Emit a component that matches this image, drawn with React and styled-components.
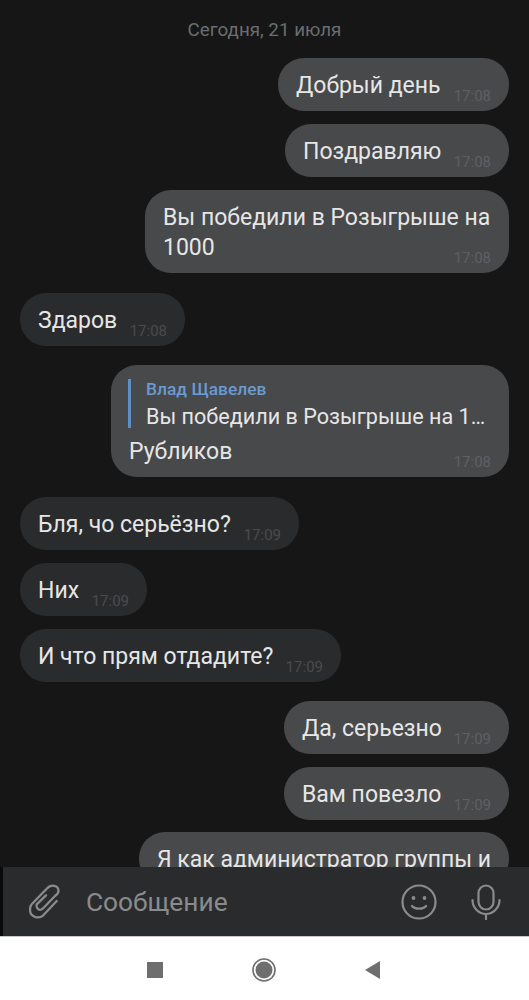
import React from 'react';
import styled, { createGlobalStyle } from 'styled-components';

const GlobalStyle = createGlobalStyle`
    html, body {
        margin: 0;
        padding: 0;
        background: #fff;
    }
    * {
        box-sizing: border-box;
    }
`;

const Screen = styled.div`
    display: flex;
    flex-direction: column;
    width: 529px;
    height: 1000px;
    overflow: hidden;
    font-family: Roboto, "Liberation Sans", sans-serif;
`;

const Chat = styled.main`
    flex: none;
    display: flex;
    flex-direction: column;
    height: 867px;
    padding: 0 20px;
    overflow: hidden;
    background: #161617;
`;

const DateLabel = styled.div`
    flex: none;
    height: 58px;
    padding-top: 19px;
    text-align: center;
    font-size: 18.8px;
    line-height: 22px;
    color: #6b6d70;
`;

const Bubble = styled.div`
    flex: none;
    position: relative;
    align-self: ${({ $out }) => ($out ? 'flex-end' : 'flex-start')};
    width: ${({ $width }) => $width}px;
    min-height: 53px;
    margin-top: ${({ $gap }) => $gap}px;
    padding: 13px 15px 10px 18px;
    border-radius: 26px;
    background: ${({ $out }) => ($out ? '#48494b' : '#2a2b2d')};
    font-size: 23px;
    line-height: 30px;
    color: #e6e6e6;
`;

const Time = styled.span`
    position: absolute;
    right: 18px;
    bottom: 6px;
    font-size: 15px;
    line-height: 17px;
    color: ${({ $out }) => ($out ? '#5f6063' : '#4a4b4e')};
`;

const Quote = styled.div`
    height: 49px;
    margin: 1px 0 9px -1px;
    padding-left: 15px;
    border-left: 3px solid #5e8fc4;
`;

const QuoteName = styled.div`
    font-size: 17.4px;
    font-weight: 500;
    line-height: 20px;
    color: #6a9bd1;
`;

const QuoteText = styled.div`
    font-size: 21.6px;
    line-height: 36px;
    white-space: nowrap;
`;

const Composer = styled.footer`
    flex: none;
    display: flex;
    align-items: center;
    height: 69px;
    padding: 0 28px 0 26px;
    border-left: 3px solid #0a0a0a;
    background: #2a2b2d;
`;

const Placeholder = styled.div`
    flex: 1;
    margin-left: 25px;
    font-size: 26.3px;
    color: #8a8b8d;
`;

const IconGroup = styled.div`
    display: flex;
    align-items: center;
    gap: 34px;
`;

const NavBar = styled.nav`
    flex: none;
    display: flex;
    align-items: center;
    gap: 89px;
    height: 64px;
    padding: 2px 0 0 147px;
    border-top: 1px solid #c9c9c9;
    background: #fff;
`;

const messages = [
    { id: 1, out: true, width: 231, gap: 0, text: 'Добрый день', time: '17:08' },
    { id: 2, out: true, width: 224, gap: 13, text: 'Поздравляю', time: '17:08' },
    { id: 3, out: true, width: 364, gap: 13, text: 'Вы победили в Розыгрыше на 1000', time: '17:08' },
    { id: 4, out: false, width: 165, gap: 20, text: 'Здаров', time: '17:08' },
    {
        id: 5,
        out: true,
        width: 398,
        gap: 19,
        quote: { name: 'Влад Щавелев', text: 'Вы победили в Розыгрыше на 1…' },
        text: 'Рубликов',
        time: '17:08',
    },
    { id: 6, out: false, width: 279, gap: 20, text: 'Бля, чо серьёзно?', time: '17:09' },
    { id: 7, out: false, width: 127, gap: 13, text: 'Них', time: '17:09' },
    { id: 8, out: false, width: 321, gap: 13, text: 'И что прям отдадите?', time: '17:09' },
    { id: 9, out: true, width: 225, gap: 19, text: 'Да, серьезно', time: '17:09' },
    { id: 10, out: true, width: 225, gap: 13, text: 'Вам повезло', time: '17:09' },
    { id: 11, out: true, width: 370, gap: 12, text: 'Я как администратор группы и', time: '' },
];

const PaperclipIcon = () => (
    <svg width="32" height="36" viewBox="9 8 32 36" fill="none" stroke="#8a8b8d" strokeWidth="2.3" strokeLinecap="round" strokeLinejoin="round">
        <path d="M36.7 25 L23.3 39.3 C18.5 43.5 10 41 10 34 C10 31.5 10.5 29.5 11.7 28.3 L26.7 12.7 C31 8 38.5 9 38.5 15 C38.5 17 37 18.5 35 20 L22.7 32.7 C19.5 35.5 15.8 32.5 16.7 28.3 L26 19.3" />
    </svg>
);

const SmileIcon = () => (
    <svg width="36" height="36" viewBox="0 0 36 36" fill="none" stroke="#8a8b8d" strokeWidth="2.2" strokeLinecap="round">
        <circle cx="18" cy="18" r="16.5" />
        <circle cx="12.5" cy="14" r="1.9" fill="#8a8b8d" stroke="none" />
        <circle cx="23.5" cy="14" r="1.9" fill="#8a8b8d" stroke="none" />
        <path d="M11 22 C13.5 25.5 22.5 25.5 25 22" />
    </svg>
);

const MicIcon = () => (
    <svg width="30" height="36" viewBox="0 0 30 36" fill="none" stroke="#8a8b8d" strokeWidth="2.2" strokeLinecap="round">
        <rect x="7.5" y="1.5" width="15" height="24" rx="7.5" />
        <path d="M1.5 16 C1.5 24 8 30 15 30 C22 30 28.5 24 28.5 16" />
        <path d="M15 30 L15 35" />
    </svg>
);

const NavSquare = () => (
    <svg width="16" height="16" viewBox="0 0 16 16">
        <rect width="16" height="16" fill="#6e6e6e" />
    </svg>
);

const NavCircle = () => (
    <svg width="24" height="24" viewBox="0 0 24 24">
        <circle cx="12" cy="12" r="11" fill="none" stroke="#6e6e6e" strokeWidth="1.6" />
        <circle cx="12" cy="12" r="8.5" fill="#6e6e6e" />
    </svg>
);

const NavBack = () => (
    <svg width="16" height="18" viewBox="0 0 16 18">
        <path d="M0 9 L15 0 L15 18 Z" fill="#6e6e6e" />
    </svg>
);

const App = () => (
    <Screen>
        <GlobalStyle />
        <Chat>
            <DateLabel>Сегодня, 21 июля</DateLabel>
            {messages.map((m) => (
                <Bubble key={m.id} $out={m.out} $width={m.width} $gap={m.gap}>
                    {m.quote && (
                        <Quote>
                            <QuoteName>{m.quote.name}</QuoteName>
                            <QuoteText>{m.quote.text}</QuoteText>
                        </Quote>
                    )}
                    {m.text}
                    {m.time && <Time $out={m.out}>{m.time}</Time>}
                </Bubble>
            ))}
        </Chat>
        <Composer>
            <PaperclipIcon />
            <Placeholder>Сообщение</Placeholder>
            <IconGroup>
                <SmileIcon />
                <MicIcon />
            </IconGroup>
        </Composer>
        <NavBar>
            <NavSquare />
            <NavCircle />
            <NavBack />
        </NavBar>
    </Screen>
);

export default App;
